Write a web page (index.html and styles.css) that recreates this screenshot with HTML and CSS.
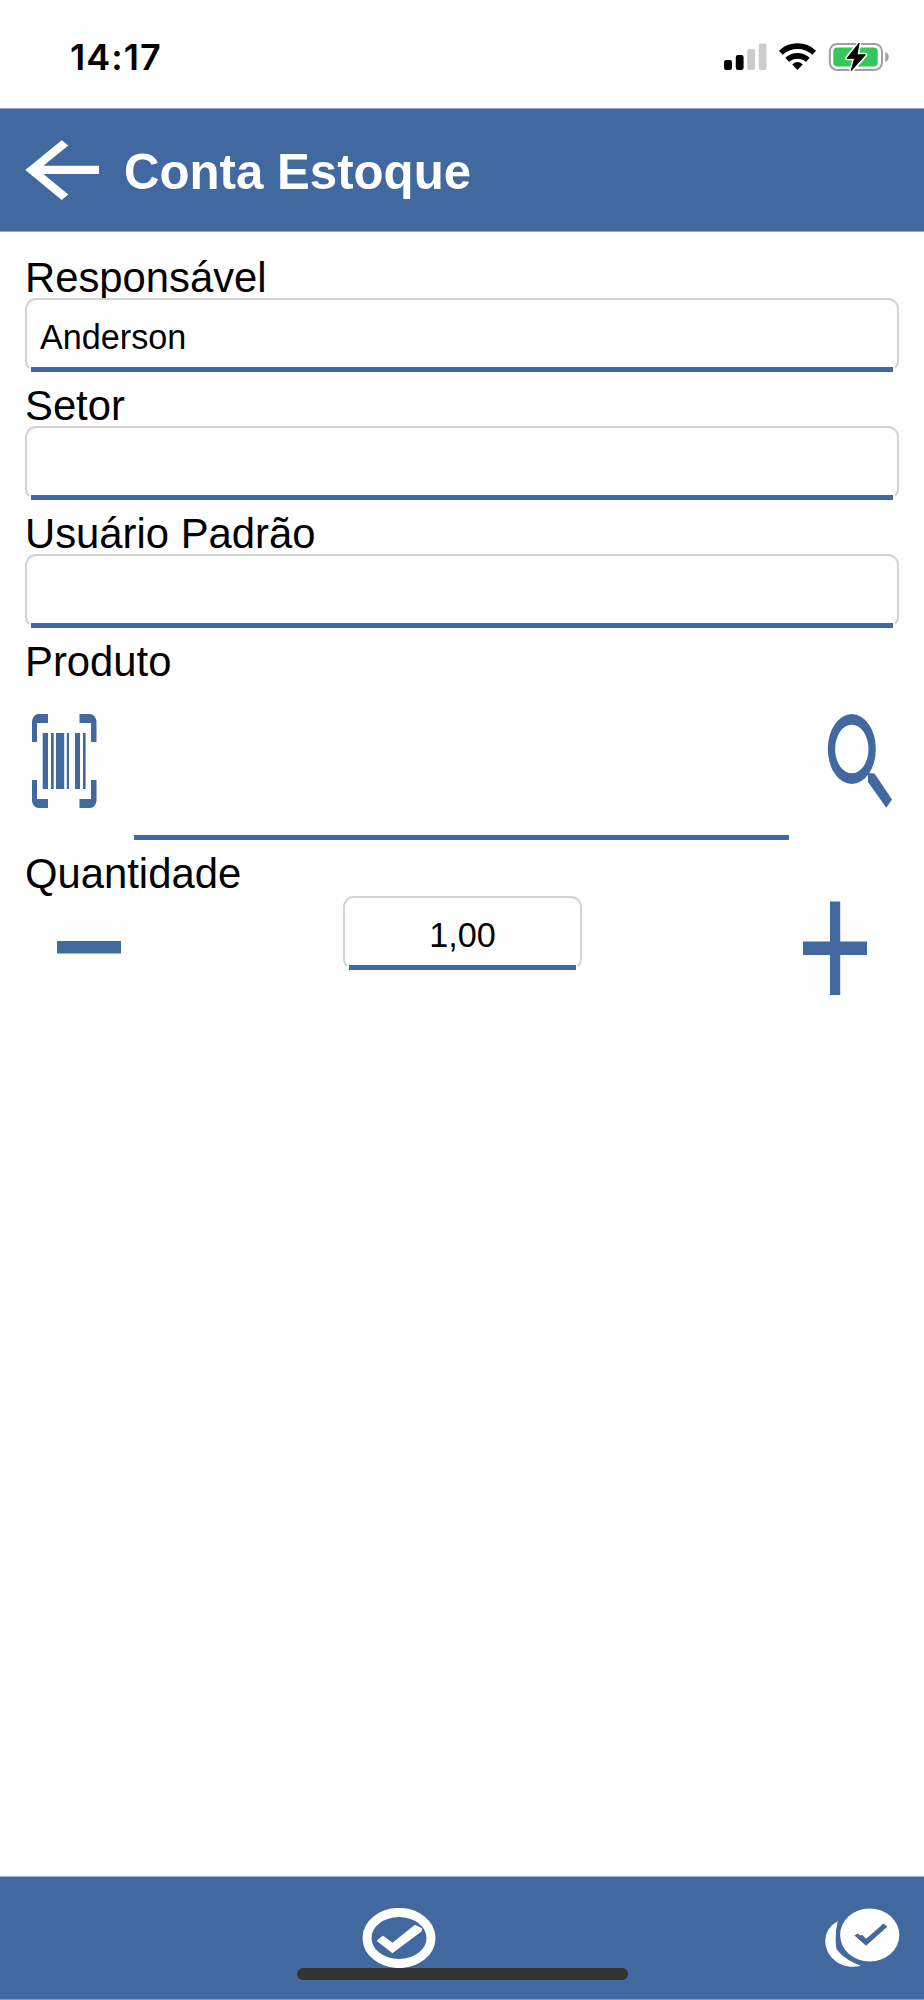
FILE: index.html
```html
<!DOCTYPE html>
<html lang="pt-BR">
<head>
<meta charset="utf-8">
<title>Conta Estoque</title>
<link rel="stylesheet" href="styles.css">
</head>
<body>
<div class="screen">
  <div class="status">
    <span class="clock">14:17</span>
    <svg class="status-icons" viewBox="720 40 172 34" width="172" height="34">
      <rect x="724" y="60" width="8" height="10" rx="2.2"/>
      <rect x="735.8" y="55" width="7.8" height="15" rx="2.2"/>
      <g fill="#cbcbcb"><rect x="747.2" y="49" width="7.8" height="21" rx="2.2"/><rect x="758.8" y="43.6" width="7.6" height="26.4" rx="2.2"/></g>
      <g fill="none" stroke="#000" stroke-width="5.6"><path d="M780.8 52.7a24.5 24.5 0 0 1 33.4 0"/><path d="M787.2 59.9a15.3 15.3 0 0 1 20.6 0"/></g>
      <path d="M792.2 64.4q5.3-4.6 10.6 0l-5.300 5.600z"/>
      <rect x="829.8" y="43.9" width="52.2" height="26" rx="7.5" fill="none" stroke="#a0a0a0" stroke-width="2"/>
      <rect x="833.3" y="47.6" width="44.4" height="18.8" rx="4" fill="#34c759"/>
      <path d="M885.2 52v10q3.500-1.400 3.500-5t-3.500-5z" fill="#a0a0a0"/>
      <path d="M859.2 43 847 58.3h7.7l-3.5 12.4 14.2-15.9h-8.500z" stroke="#fff" stroke-width="4" stroke-linejoin="round"/>
      <path d="M859.2 43 847 58.3h7.7l-3.5 12.4 14.2-15.9h-8.500z" stroke="#000" stroke-linejoin="round"/>
    </svg>
  </div>
  <header class="topbar">
    <svg class="back" viewBox="25 140 75 60" width="75" height="60"><path fill="#fff" d="M61.7 140.3 25.3 170l36.4 30 6.600-5.400L43.400 174H99v-8.200H43.400l24.900-20.300z"/></svg>
    <h1 class="title">Conta Estoque</h1>
  </header>
  <main class="form">
    <div class="group"><div class="label">Responsável</div><div class="field">Anderson</div></div>
    <div class="group"><div class="label">Setor</div><div class="field"></div></div>
    <div class="group"><div class="label">Usuário Padrão</div><div class="field"></div></div>
    <div class="label">Produto</div>
    <div class="product">
      <svg class="barcode" viewBox="32 714 65 94" width="65" height="94">
        <path d="M48 714v9H37v19h-5v-21q1-6 6-7zM79.500 714h11q5 1 6 7v21H91v-19H79.500zM32 780h5v19h11v9H38q-5-1-6-7zM91 780h5.500v21q-1 6-6 7h-11v-9H91zM42.700 733H48v56h-5.300zM51 733h2.700v56H51zM56 733h8.200v56H56zM66.800 733H69v56h-2.200zM75 733h5v56h-5zM83 733h2.600v56H83z"/>
      </svg>
      <div class="product-input"></div>
      <svg class="search" viewBox="827 714 66 96" width="66" height="96">
        <path fill-rule="evenodd" d="M827.800 749a24 35 0 1 0 48 0a24 35 0 1 0-48 0m7.300 0a16.700 24.300 0 1 1 33.400 0a16.700 24.300 0 1 1-33.400 0"/>
        <path d="m868 773 6.500.5 17.500 26-5.700 8.300L868 782z"/>
      </svg>
    </div>
    <div class="label">Quantidade</div>
    <div class="quantity">
      <svg class="minus" viewBox="0 0 64 94" width="64" height="94"><path d="M0 40h64v12.400H0z"/></svg>
      <div class="field amount">1,00</div>
      <svg class="plus" viewBox="0 0 64 94" width="64" height="94"><path d="M27 .5h10.200v40H64V54H37.200v40H27V54H0V40.500h27z"/></svg>
    </div>
  </main>
  <footer class="bottombar">
    <svg class="confirm" viewBox="362 1908 75 60" width="75" height="60">
      <ellipse cx="399" cy="1938" rx="32" ry="25.600" fill="none" stroke="#fff" stroke-width="9"/>
      <path fill="#fff" stroke="#fff" stroke-width="2" stroke-linejoin="round" d="m378 1940.800 5-4 9.500 7.200 22.500-18 6 3-.5 2-28 21z"/>
    </svg>
    <svg class="confirm-all" viewBox="825 1908 75 60" width="75" height="60">
      <ellipse cx="869.700" cy="1935" rx="29.600" ry="26.600" fill="#fff"/>
      <path fill="#fff" d="M837.800 1921Q825.500 1928 825.200 1941c.5 17 17 29.500 35.800 24.800-12-4.500-20-10.500-24.500-16.800q-2.200-13.500 1.300-28z"/>
      <path fill="#41699f" d="m854.500 1935.500 3-2 3 2 1.500-.7 4.200 3.900 17.300-15.300 3.800 3.400-21.300 19z"/>
    </svg>
    <div class="home-indicator"></div>
  </footer>
</div>
</body>
</html>
```
FILE: styles.css
```css
* { box-sizing: border-box; }

body {
  margin: 0;
  background: #fefefe;
  color: #000;
  font-family: "Liberation Sans", Arial, sans-serif;
}

svg { display: block; flex: none; }

.screen {
  display: flex;
  flex-direction: column;
  width: 924px;
  height: 2000px;
}

.status {
  display: flex;
  justify-content: space-between;
  height: 108px;
  padding: 40px 32px 0 70px;
}

.clock {
  font: 600 36px/34px Inter, sans-serif;
  letter-spacing: 1px;
}

.topbar {
  display: flex;
  align-items: center;
  gap: 24px;
  height: 124px;
  padding: 0 25px;
  background: #41699f;
  border-top: 1px solid #8fa8c9;
  border-bottom: 1px solid #8fa8c9;
}

.title {
  margin: 3px 0 0;
  color: #fff;
  font-size: 49.2px;
  font-weight: 700;
  line-height: 60px;
}

.form {
  flex: 1;
  padding: 24px 25px 0;
}

.group { margin-bottom: 12px; }

.label {
  height: 42px;
  font-size: 41.8px;
  line-height: 44px;
}

.field {
  position: relative;
  height: 74px;
  padding: 0 13px;
  background: #fefefe;
  border: 2px solid #d4d4d4;
  border-bottom-color: transparent;
  border-radius: 11px;
  font-size: 34.2px;
  line-height: 74px;
}

.field::after {
  content: "";
  position: absolute;
  right: 4px;
  bottom: -2px;
  left: 4px;
  height: 5px;
  background: #41699f;
}

.barcode, .search, .minus, .plus { fill: #41699f; }

.product {
  display: flex;
  height: 170px;
  padding: 32px 6px 0 7px;
}

.product-input {
  width: 655px;
  height: 126px;
  margin: 0 auto 0 37px;
  border-bottom: 5px solid #41699f;
}

.quantity {
  display: flex;
  justify-content: space-between;
  padding: 2px 32px 0;
}

.minus, .plus { margin-top: 5px; }

.amount {
  width: 239px;
  padding-left: 14px;
  text-align: center;
}

.bottombar {
  position: relative;
  display: flex;
  justify-content: space-between;
  height: 124px;
  padding: 31px 24px 0 362px;
  background: #41699f;
  border-top: 1px solid #a0b4d0;
  border-bottom: 1px solid #7f9cc5;
}

.home-indicator {
  position: absolute;
  bottom: 19px;
  left: 297px;
  width: 331px;
  height: 12px;
  border-radius: 6px;
  background: #333;
}
```
